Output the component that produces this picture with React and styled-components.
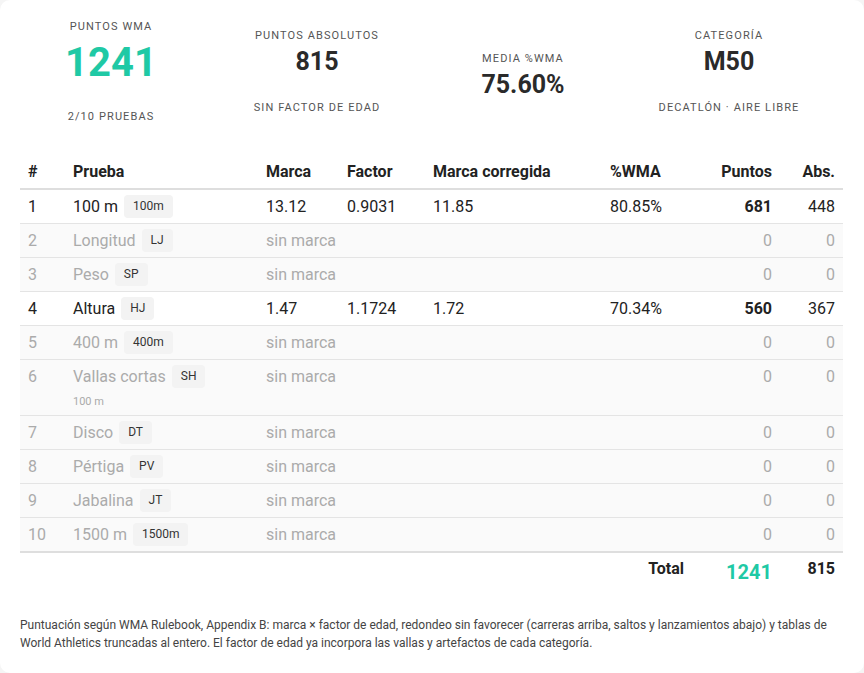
import React from "react";
import styled, {createGlobalStyle} from "styled-components";

const GlobalStyle = createGlobalStyle`
  html, body {
    margin: 0;
    padding: 0;
    background: #f5f5f5;
  }
  body {
    font-family: Roboto, "Liberation Sans", Arial, sans-serif;
    color: #222;
  }
`;

const TEAL = "#1fc9a5";

const Card = styled.div`
  box-sizing: border-box;
  min-height: 673px;
  background: #ffffff;
  border-radius: 10px;
  padding: 20px 21px 20px 20px;
`;

const StatsGrid = styled.div`
  display: grid;
  grid-template-columns: repeat(4, 1fr);
  align-items: center;
  margin: 0 11px 0 -12px;
`;

const Stat = styled.div`
  display: flex;
  flex-direction: column;
  align-items: center;
  text-align: center;
  padding-top: ${(p) => p.$offset || 0}px;
`;

const StatLabel = styled.div`
  font-size: 11px;
  line-height: 13px;
  letter-spacing: 1.1px;
  text-transform: uppercase;
  color: #555;
`;

const StatValue = styled.div`
  margin-top: ${(p) => (p.$big ? "6px" : "5px")};
  font-size: ${(p) => (p.$big ? "40px" : "25px")};
  line-height: ${(p) => (p.$big ? "47px" : "30px")};
  font-weight: 700;
  color: ${(p) => (p.$accent ? TEAL : "#2a2a2a")};
`;

const StatSub = styled(StatLabel)`
  margin-top: 24px;
`;

const Table = styled.table`
  width: 100%;
  margin-top: 29px;
  border-collapse: collapse;
  table-layout: fixed;
  font-size: 16px;
`;

const Th = styled.th`
  padding: 10px 8px 7px;
  line-height: 19px;
  font-weight: 700;
  color: #222;
  text-align: ${(p) => (p.$right ? "right" : "left")};
  border-bottom: 2px solid #dedede;
`;

const Row = styled.tr`
  background: ${(p) => (p.$muted ? "#fafafa" : "#ffffff")};
  color: ${(p) => (p.$muted ? "#ababab" : "#222")};
  border-bottom: 1px solid ${(p) => (p.$last ? "transparent" : "#e4e4e4")};
`;

const Td = styled.td`
  padding: 5px 8px;
  line-height: 23px;
  vertical-align: top;
  white-space: nowrap;
  text-align: ${(p) => (p.$right ? "right" : "left")};
  font-weight: ${(p) => (p.$bold ? 700 : 400)};
`;

const Badge = styled.span`
  display: inline-block;
  margin-left: 6px;
  padding: 0 9px;
  font-size: 12px;
  line-height: 23px;
  color: #333;
  background: #f3f3f3;
  border-radius: 4px;
  vertical-align: top;
`;

const SubNote = styled.div`
  margin-top: 5px;
  font-size: 11px;
  line-height: 17px;
  color: #aaa;
`;

const TotalRow = styled.tr`
  border-top: 2px solid #dedede;
`;

const TotalCell = styled.td`
  padding: 6px 8px;
  text-align: right;
  vertical-align: top;
  font-weight: 700;
  font-size: ${(p) => (p.$accent ? "20px" : "16px")};
  line-height: ${(p) => (p.$accent ? "27px" : "19px")};
  color: ${(p) => (p.$accent ? TEAL : "#222")};
`;

const Footnote = styled.p`
  margin: 24px 0 0;
  font-size: 12px;
  line-height: 18px;
  color: #444;
`;

const columns = [
    {label: "#", width: 45},
    {label: "Prueba", width: 193},
    {label: "Marca", width: 81},
    {label: "Factor", width: 86},
    {label: "Marca corregida", width: 177},
    {label: "%WMA", width: 90},
    {label: "Puntos", width: 88, right: true},
    {label: "Abs.", width: 63, right: true},
];

const events = [
    {n: 1, name: "100 m", code: "100m", mark: "13.12", factor: "0.9031", corrected: "11.85", pct: "80.85%", pts: 681, abs: 448},
    {n: 2, name: "Longitud", code: "LJ"},
    {n: 3, name: "Peso", code: "SP"},
    {n: 4, name: "Altura", code: "HJ", mark: "1.47", factor: "1.1724", corrected: "1.72", pct: "70.34%", pts: 560, abs: 367},
    {n: 5, name: "400 m", code: "400m"},
    {n: 6, name: "Vallas cortas", code: "SH", note: "100 m"},
    {n: 7, name: "Disco", code: "DT"},
    {n: 8, name: "Pértiga", code: "PV"},
    {n: 9, name: "Jabalina", code: "JT"},
    {n: 10, name: "1500 m", code: "1500m"},
];

export default function App() {
    return (
        <>
            <GlobalStyle/>
            <Card>
                <StatsGrid>
                    <Stat>
                        <StatLabel>Puntos WMA</StatLabel>
                        <StatValue $big $accent>1241</StatValue>
                        <StatSub>2/10 pruebas</StatSub>
                    </Stat>
                    <Stat>
                        <StatLabel>Puntos absolutos</StatLabel>
                        <StatValue>815</StatValue>
                        <StatSub>Sin factor de edad</StatSub>
                    </Stat>
                    <Stat $offset={8}>
                        <StatLabel>Media %WMA</StatLabel>
                        <StatValue>75.60%</StatValue>
                    </Stat>
                    <Stat>
                        <StatLabel>Categoría</StatLabel>
                        <StatValue>M50</StatValue>
                        <StatSub>Decatlón · Aire libre</StatSub>
                    </Stat>
                </StatsGrid>

                <Table>
                    <colgroup>
                        {columns.map((c) => (
                            <col key={c.label} style={{width: c.width}}/>
                        ))}
                    </colgroup>
                    <thead>
                    <tr>
                        {columns.map((c) => (
                            <Th key={c.label} $right={c.right}>{c.label}</Th>
                        ))}
                    </tr>
                    </thead>
                    <tbody>
                    {events.map((e, i) => {
                        const muted = !e.mark;
                        return (
                            <Row key={e.n} $muted={muted} $last={i === events.length - 1}>
                                <Td>{e.n}</Td>
                                <Td>
                                    {e.name}
                                    <Badge>{e.code}</Badge>
                                    {e.note && <SubNote>{e.note}</SubNote>}
                                </Td>
                                <Td>{muted ? "sin marca" : e.mark}</Td>
                                <Td>{e.factor}</Td>
                                <Td>{e.corrected}</Td>
                                <Td>{e.pct}</Td>
                                <Td $right $bold={!muted}>{muted ? 0 : e.pts}</Td>
                                <Td $right>{muted ? 0 : e.abs}</Td>
                            </Row>
                        );
                    })}
                    </tbody>
                    <tfoot>
                    <TotalRow>
                        <TotalCell colSpan={6}>Total</TotalCell>
                        <TotalCell $accent>1241</TotalCell>
                        <TotalCell>815</TotalCell>
                    </TotalRow>
                    </tfoot>
                </Table>

                <Footnote>
                    Puntuación según WMA Rulebook, Appendix B: marca × factor de edad, redondeo sin favorecer
                    (carreras arriba, saltos y lanzamientos abajo) y tablas de World Athletics truncadas al
                    entero. El factor de edad ya incorpora las vallas y artefactos de cada categoría.
                </Footnote>
            </Card>
        </>
    );
}
